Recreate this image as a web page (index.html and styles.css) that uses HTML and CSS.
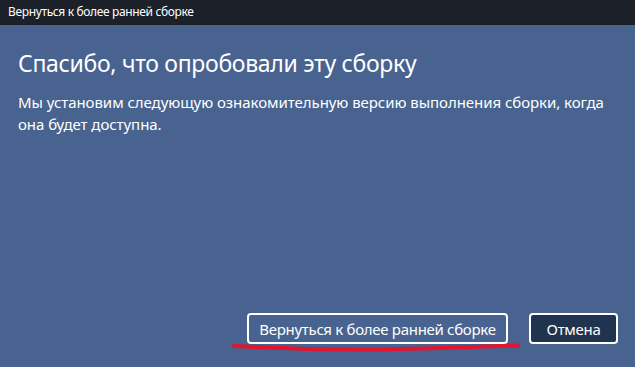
FILE: index.html
```html
<!DOCTYPE html>
<html lang="ru">
<head>
<meta charset="utf-8">
<link rel="stylesheet" href="styles.css">
</head>
<body>
<div class="window">
  <div class="titlebar">Вернуться к более ранней сборке</div>
  <div class="content">
    <h1 class="heading">Спасибо, что опробовали эту сборку</h1>
    <p class="text">Мы установим следующую ознакомительную версию выполнения сборки, когда она будет доступна.</p>
    <div class="spacer"></div>
    <div class="actions">
      <div class="primary-wrap">
        <button class="btn btn-outline">Вернуться к более ранней сборке</button>
        <svg class="scribble" width="292" height="14" viewBox="0 0 292 14">
          <path d="M3 5 C40 7 80 8.5 130 8.5 C170 8.5 205 7 240 6 C262 5.5 277 5 287 4.5" fill="none" stroke="#e2142e" stroke-width="4" stroke-linecap="round"/>
        </svg>
      </div>
      <button class="btn btn-dark">Отмена</button>
    </div>
  </div>
</div>
</body>
</html>
```
FILE: styles.css
```css
html, body {
  margin: 0;
  padding: 0;
}
body {
  width: 635px;
  height: 367px;
  overflow: hidden;
  font-family: "Noto Sans", "Open Sans", sans-serif;
  color: #fff;
  background: #48638f;
}
.window {
  display: flex;
  flex-direction: column;
  height: 367px;
}
.titlebar {
  height: 25px;
  flex: 0 0 25px;
  background: #1c2029;
  font-size: 12px;
  line-height: 24px;
  padding-left: 8px;
  letter-spacing: -0.35px;
}
.content {
  flex: 1;
  display: flex;
  flex-direction: column;
  padding: 22px 17px 23px 18px;
}
.heading {
  margin: 0;
  font-weight: 400;
  font-size: 23px;
  line-height: 32px;
  letter-spacing: -0.3px;
}
.text {
  margin: 12px 0 0 0;
  font-size: 15px;
  line-height: 22px;
  letter-spacing: -0.05px;
  max-width: 596px;
}
.spacer {
  flex: 1;
}
.actions {
  display: flex;
  justify-content: flex-end;
  gap: 21px;
}
.primary-wrap {
  position: relative;
}
.btn {
  font-family: inherit;
  font-size: 15px;
  color: #fff;
  height: 31px;
  border: 2px solid #fff;
  border-radius: 4px;
  padding: 0 8px;
  letter-spacing: -0.3px;
  display: block;
}
.btn-outline {
  background: #48638f;
  width: 261px;
}
.btn-dark {
  background: #21344f;
  width: 89px;
}
.scribble {
  position: absolute;
  left: -16px;
  top: 28px;
}
```
